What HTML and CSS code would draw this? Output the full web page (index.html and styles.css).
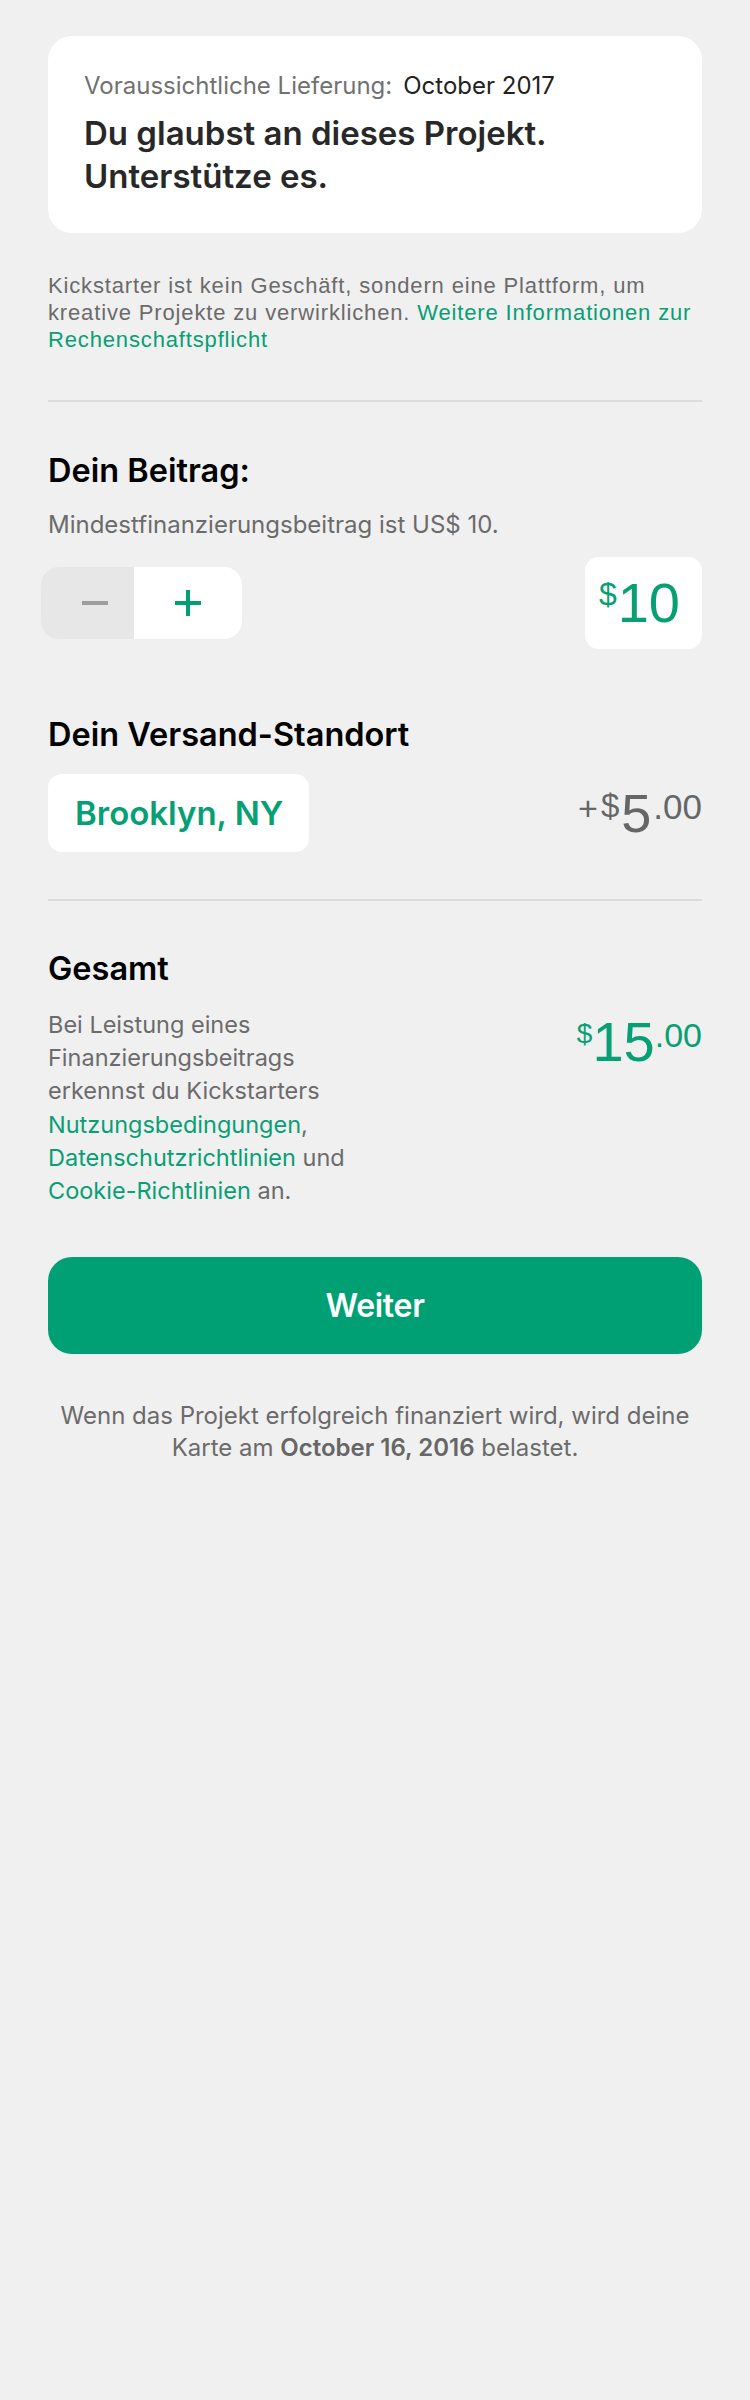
FILE: index.html
```html
<!DOCTYPE html>
<html lang="de">
<head>
<meta charset="utf-8">
<title>Unterstützen</title>
<link rel="stylesheet" href="styles.css">
</head>
<body>
<main class="page">
  <section class="card">
    <p class="delivery"><span class="delivery-label">Voraussichtliche Lieferung:</span><span class="delivery-date">October 2017</span></p>
    <h1 class="card-title">Du glaubst an dieses Projekt.<br>Unterstütze es.</h1>
  </section>

  <p class="disclaimer">Kickstarter ist kein Geschäft, sondern eine Plattform, um kreative Projekte zu verwirklichen. <a class="link" href="#">Weitere Informationen zur Rechenschaftspflicht</a></p>

  <hr class="divider">

  <section class="pledge">
    <h2 class="section-title">Dein Beitrag:</h2>
    <p class="hint">Mindestfinanzierungsbeitrag ist US$ 10.</p>
    <div class="pledge-row">
      <div class="stepper">
        <button class="step step-minus" aria-label="Weniger">
          <svg width="26" height="4" viewBox="0 0 26 4"><rect width="26" height="4" fill="#9e9e9e"/></svg>
        </button>
        <button class="step step-plus" aria-label="Mehr">
          <svg width="26" height="26" viewBox="0 0 26 26"><rect x="0" y="11" width="26" height="4" fill="#039f74"/><rect x="11" y="0" width="4" height="26" fill="#039f74"/></svg>
        </button>
      </div>
      <div class="amount-box">
        <span class="amount-currency">$</span><span class="amount-value">10</span>
      </div>
    </div>
  </section>

  <section class="shipping">
    <h2 class="section-title">Dein Versand-Standort</h2>
    <div class="shipping-row">
      <button class="location">Brooklyn, NY</button>
      <div class="price price-gray">
        <span class="price-plus">+</span><span class="price-cur">$</span><span class="price-main">5</span><span class="price-cents">.00</span>
      </div>
    </div>
  </section>

  <hr class="divider">

  <section class="total">
    <h2 class="section-title">Gesamt</h2>
    <div class="total-row">
      <p class="terms">Bei Leistung eines Finanzierungsbeitrags erkennst du Kickstarters <a class="link" href="#">Nutzungsbedingungen</a>, <a class="link" href="#">Datenschutzrichtlinien</a> und <a class="link" href="#">Cookie-Richtlinien</a> an.</p>
      <div class="price price-green">
        <span class="price-cur total-cur">$</span><span class="price-main">15</span><span class="price-cents total-cents">.00</span>
      </div>
    </div>
  </section>

  <button class="continue">Weiter</button>

  <p class="footnote">Wenn das Projekt erfolgreich finanziert wird, wird deine Karte am <strong>October 16, 2016</strong> belastet.</p>
</main>
</body>
</html>
```

FILE: styles.css
```css
* { box-sizing: border-box; }

html, body {
  margin: 0;
  padding: 0;
  background: #f0f0f0;
}

body {
  min-height: 2400px;
  font-family: Inter, "Noto Sans", sans-serif;
  color: #282828;
}

.page {
  padding: 36px 48px 0 48px;
}

.card {
  background: #ffffff;
  border-radius: 24px;
  padding: 35px 36px 35px 36px;
}

.delivery {
  margin: 0;
  font-size: 24px;
  line-height: 30px;
}

.delivery-label {
  color: #717171;
}

.delivery-date {
  color: #222222;
  margin-left: 11px;
}

.card-title {
  margin: 11px 0 0 0;
  font-size: 33px;
  line-height: 43px;
  font-weight: 600;
  color: #282828;
}

.disclaimer {
  margin: 39px 0 0 0;
  font-family: "Liberation Sans", Arial, sans-serif;
  font-size: 22px;
  line-height: 27px;
  letter-spacing: 0.85px;
  color: #6b6b6b;
}

.link {
  color: #079f74;
  text-decoration: none;
}

.divider {
  border: 0;
  height: 2px;
  background: #dcdcdc;
  margin: 47px 0 0 0;
}

.section-title {
  margin: 0;
  font-size: 32.5px;
  line-height: 40px;
  font-weight: 600;
  color: #000000;
}

.pledge {
  padding-top: 49px;
}

.hint {
  margin: 20px 0 0 0;
  font-size: 24px;
  line-height: 28px;
  color: #6b6b6b;
}

.pledge-row {
  margin-top: 18px;
  display: flex;
  justify-content: space-between;
  align-items: center;
}

.stepper {
  display: flex;
  width: 201px;
  height: 72px;
  margin-left: -7px;
  border-radius: 18px;
  overflow: hidden;
}

.step {
  border: 0;
  padding: 0;
  margin: 0;
  height: 72px;
  display: flex;
  align-items: center;
  cursor: pointer;
}

.step svg { display: block; }

.step-minus {
  width: 93px;
  background: #e7e7e7;
  padding-left: 41px;
}

.step-plus {
  width: 108px;
  background: #ffffff;
  justify-content: center;
}

.amount-box {
  display: flex;
  align-items: flex-start;
  background: #ffffff;
  border-radius: 14px;
  padding: 18px 22px 18px 14px;
  font-family: "Liberation Sans", Arial, sans-serif;
  color: #079f74;
}

.amount-currency {
  font-size: 32px;
  line-height: 32px;
  margin-top: 3px;
  margin-right: 1px;
}

.amount-value {
  font-size: 56px;
  line-height: 56px;
}

.shipping {
  padding-top: 66px;
}

.shipping-row {
  margin-top: 19px;
  display: flex;
  justify-content: space-between;
  align-items: center;
}

.location {
  border: 0;
  margin: 0;
  background: #ffffff;
  border-radius: 14px;
  padding: 19px 26px 19px 27px;
  font-family: Inter, "Noto Sans", sans-serif;
  font-size: 33px;
  line-height: 40px;
  font-weight: 600;
  color: #079f74;
  cursor: pointer;
}

.price {
  display: flex;
  align-items: flex-start;
  font-family: "Liberation Sans", Arial, sans-serif;
}

.price-gray { color: #666666; }
.price-green { color: #079f74; }

.price-plus {
  font-size: 34px;
  line-height: 34px;
  margin-top: 5px;
  margin-right: 3px;
}

.price-gray .price-cur {
  margin-right: 2px;
}

.price-gray .price-main {
  margin-right: 2px;
}

.price-cur {
  font-size: 33px;
  line-height: 33px;
  margin-top: 3px;
}

.price-main {
  font-size: 54px;
  line-height: 54px;
}

.price-cents {
  font-size: 35px;
  line-height: 35px;
  margin-top: 3px;
}

.total {
  padding-top: 48px;
}

.total-row {
  margin-top: 19px;
  display: flex;
  justify-content: space-between;
  align-items: flex-start;
}

.terms {
  margin: 0;
  width: 50%;
  font-size: 23.5px;
  line-height: 33.2px;
  color: #6b6b6b;
}

.total-row .price {
  margin-top: 6px;
}

.total-row .price-main {
  font-size: 56px;
  line-height: 56px;
}

.total-cur {
  font-size: 28px;
  line-height: 28px;
  margin-top: 6px;
}

.total-cents {
  font-size: 34px;
  line-height: 34px;
  margin-top: 4px;
}

.continue {
  display: block;
  width: 100%;
  height: 97px;
  margin: 50px 0 0 0;
  border: 0;
  border-radius: 24px;
  background: #009f74;
  color: #ffffff;
  font-family: Inter, "Noto Sans", sans-serif;
  font-size: 32px;
  font-weight: 600;
  letter-spacing: -0.3px;
  cursor: pointer;
}

.footnote {
  margin: 46px 0 0 0;
  padding: 0 4px;
  text-align: center;
  font-size: 24px;
  line-height: 32px;
  color: #6b6b6b;
}

.footnote strong {
  font-weight: 600;
  color: #666666;
}
```
